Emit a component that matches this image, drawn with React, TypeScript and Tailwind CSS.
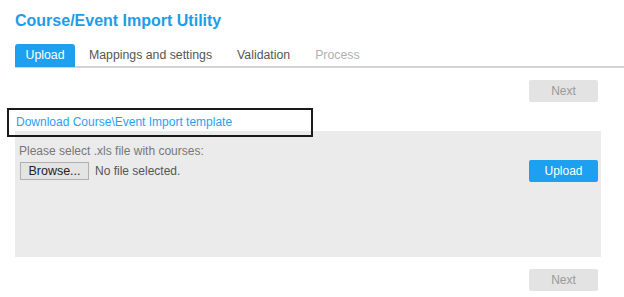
import React from "react";

const tabs = [
  { label: "Upload", state: "active" },
  { label: "Mappings and settings", state: "idle" },
  { label: "Validation", state: "idle" },
  { label: "Process", state: "disabled" },
];

function NextButton() {
  return (
    <button className="w-[69px] h-[22px] bg-[#e3e3e3] text-[#9a9a9a] text-[12px] rounded-[2px]">
      Next
    </button>
  );
}

export default function App() {
  return (
    <div className="relative w-[624px] h-[297px] bg-white overflow-hidden font-['Liberation_Sans',Arial,sans-serif]">
      <h1 className="pl-[15px] pt-[12px] h-[44px] text-[16px] leading-[18px] font-bold text-[#1e9ce8]">
        Course/Event Import Utility
      </h1>

      <div className="ml-[15px] flex gap-[3px] h-[24px] border-b-2 border-[#d4d4d4]">
        {tabs.map((t) => (
          <div
            key={t.label}
            className={`h-[23px] flex items-center justify-center text-[12.3px] rounded-t-[3px] ${
              t.state === "active"
                ? "w-[60px] bg-[#1ca0ef] text-white"
                : t.state === "disabled"
                ? "px-[11px] text-[#b0b0b0]"
                : "px-[11px] text-[#555]"
            }`}
          >
            {t.label}
          </div>
        ))}
      </div>

      <div className="flex justify-end pr-[26px] mt-[12px]">
        <NextButton />
      </div>

      <div className="pl-[16px] mt-[13px] h-[16px] text-[12px] leading-[14px] text-[#2a9ff0]">
        Download Course\Event Import template
      </div>

      <div className="ml-[15px] w-[586px] h-[126px] bg-[#ebebeb] pl-[4px] pr-[3px] pt-[13px]">
        <div className="text-[12px] leading-[14px] text-[#777]">Please select .xls file with courses:</div>
        <div className="flex items-center mt-[2px]">
          <button className="ml-[1px] w-[69px] h-[18px] bg-[#e4e4e4] border border-[#b0b0b0] text-[12.5px] text-[#222] leading-none">
            Browse...
          </button>
          <span className="ml-[6px] text-[12px] text-[#555]">No file selected.</span>
          <button className="ml-auto w-[69px] h-[22px] bg-[#1ca0ef] text-white text-[12px] rounded-[2px]">
            Upload
          </button>
        </div>
      </div>

      <div className="flex justify-end pr-[26px] mt-[12px]">
        <NextButton />
      </div>

      <div className="absolute left-[7px] top-[108px] w-[306px] h-[29px] border-2 border-[#1a1a1a]" />
    </div>
  );
}
